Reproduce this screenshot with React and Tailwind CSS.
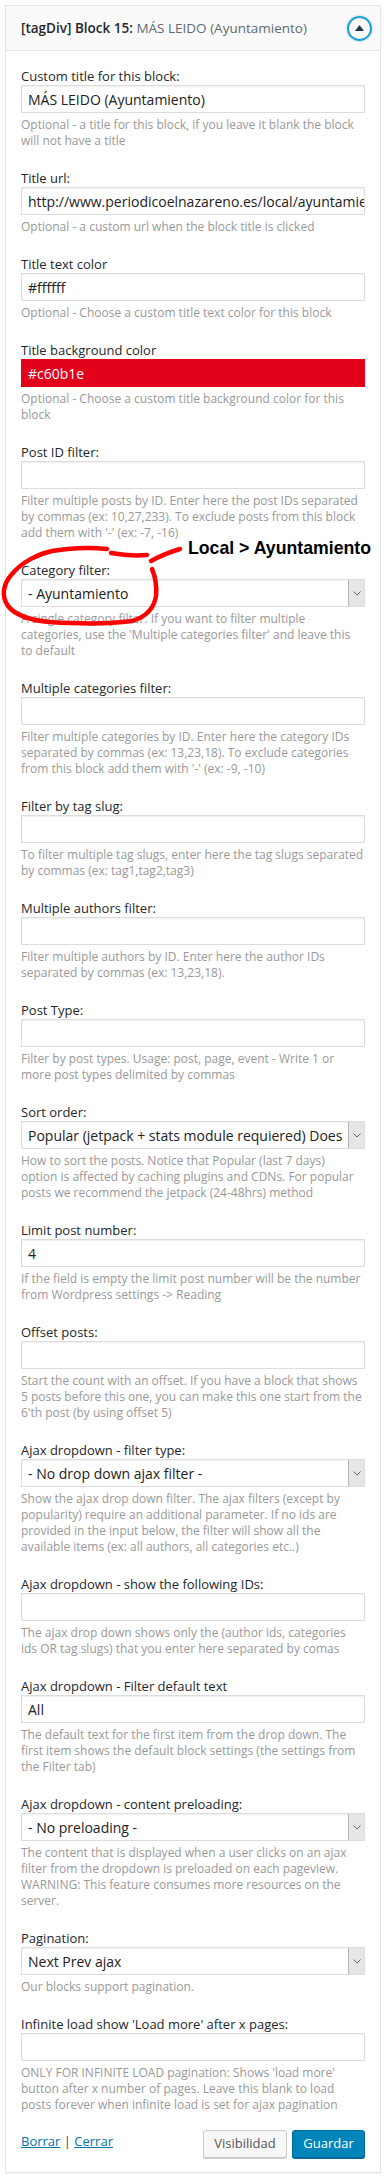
import React from 'react';

const fields = [
  {
    label: 'Custom title for this block:',
    value: 'MÁS LEIDO (Ayuntamiento)',
    help: ['Optional - a title for this block, if you leave it blank the block', 'will not have a title'],
  },
  {
    label: 'Title url:',
    value: 'http://www.periodicoelnazareno.es/local/ayuntamiento/',
    help: ['Optional - a custom url when the block title is clicked'],
  },
  {
    label: 'Title text color',
    value: '#ffffff',
    help: ['Optional - Choose a custom title text color for this block'],
  },
  {
    label: 'Title background color',
    value: '#c60b1e',
    red: true,
    help: ['Optional - Choose a custom title background color for this', 'block'],
  },
  {
    label: 'Post ID filter:',
    help: [
      'Filter multiple posts by ID. Enter here the post IDs separated',
      'by commas (ex: 10,27,233). To exclude posts from this block',
      "add them with '-' (ex: -7, -16)",
    ],
  },
  {
    label: 'Category filter:',
    select: '- Ayuntamiento',
    help: [
      'A single category filter. If you want to filter multiple',
      "categories, use the 'Multiple categories filter' and leave this",
      'to default',
    ],
  },
  {
    label: 'Multiple categories filter:',
    help: [
      'Filter multiple categories by ID. Enter here the category IDs',
      'separated by commas (ex: 13,23,18). To exclude categories',
      "from this block add them with '-' (ex: -9, -10)",
    ],
  },
  {
    label: 'Filter by tag slug:',
    help: ['To filter multiple tag slugs, enter here the tag slugs separated', 'by commas (ex: tag1,tag2,tag3)'],
  },
  {
    label: 'Multiple authors filter:',
    help: ['Filter multiple authors by ID. Enter here the author IDs', 'separated by commas (ex: 13,23,18).'],
  },
  {
    label: 'Post Type:',
    help: ['Filter by post types. Usage: post, page, event - Write 1 or', 'more post types delimited by commas'],
  },
  {
    label: 'Sort order:',
    select: 'Popular (jetpack + stats module requiered) Does',
    help: [
      'How to sort the posts. Notice that Popular (last 7 days)',
      'option is affected by caching plugins and CDNs. For popular',
      'posts we recommend the jetpack (24-48hrs) method',
    ],
  },
  {
    label: 'Limit post number:',
    value: '4',
    help: ['If the field is empty the limit post number will be the number', 'from Wordpress settings -> Reading'],
  },
  {
    label: 'Offset posts:',
    help: [
      'Start the count with an offset. If you have a block that shows',
      '5 posts before this one, you can make this one start from the',
      "6'th post (by using offset 5)",
    ],
  },
  {
    label: 'Ajax dropdown - filter type:',
    select: '- No drop down ajax filter -',
    help: [
      'Show the ajax drop down filter. The ajax filters (except by',
      'popularity) require an additional parameter. If no ids are',
      'provided in the input below, the filter will show all the',
      'available items (ex: all authors, all categories etc..)',
    ],
  },
  {
    label: 'Ajax dropdown - show the following IDs:',
    help: ['The ajax drop down shows only the (author ids, categories', 'ids OR tag slugs) that you enter here separated by comas'],
  },
  {
    label: 'Ajax dropdown - Filter default text',
    value: 'All',
    help: [
      'The default text for the first item from the drop down. The',
      'first item shows the default block settings (the settings from',
      'the Filter tab)',
    ],
  },
  {
    label: 'Ajax dropdown - content preloading:',
    select: '- No preloading -',
    help: [
      'The content that is displayed when a user clicks on an ajax',
      'filter from the dropdown is preloaded on each pageview.',
      'WARNING: This feature consumes more resources on the',
      'server.',
    ],
  },
  {
    label: 'Pagination:',
    select: 'Next Prev ajax',
    help: ['Our blocks support pagination.'],
  },
  {
    label: "Infinite load show 'Load more' after x pages:",
    help: [
      "ONLY FOR INFINITE LOAD pagination: Shows 'load more'",
      'button after x number of pages. Leave this blank to load',
      'posts forever when infinite load is set for ajax pagination',
    ],
  },
];

const Field = ({ field, last }) => {
  return (
    <div className={last ? 'mb-[17px]' : 'mb-[20px]'}>
      <div className="h-[18px] text-[13px] leading-[18px] text-[#23282d] whitespace-nowrap">{field.label}</div>
      {field.select ? (
        <div className="flex items-center h-[28px] border border-[#ddd] bg-white pl-[6px] shadow-[inset_0_1px_2px_rgba(0,0,0,0.07)]">
          <div className="flex-1 overflow-hidden whitespace-nowrap text-[14px] text-[#222] pr-[3px]">{field.select}</div>
          <div className="flex items-center justify-center w-[16px] h-[26px] bg-[#e6e6e6] border-l border-[#b5b5b5]">
            <svg width="8" height="5" viewBox="0 0 8 5">
              <path d="M0.5 0.5 L4 4 L7.5 0.5" fill="none" stroke="#666" strokeWidth="1" />
            </svg>
          </div>
        </div>
      ) : (
        <div
          className={
            field.red
              ? 'flex items-center h-[28px] border border-[#e3001b] bg-[#e3001b] px-[6px] text-[14px] text-white overflow-hidden whitespace-nowrap'
              : 'flex items-center h-[28px] border border-[#ddd] bg-white px-[6px] text-[14px] text-[#222] overflow-hidden whitespace-nowrap shadow-[inset_0_1px_2px_rgba(0,0,0,0.07)]'
          }
        >
          {field.value}
        </div>
      )}
      <div className="mt-[4px] text-[12px] leading-[16px] text-[#999]">
        {field.help.map((line, i) => (
          <div key={i} className="whitespace-nowrap">{line}</div>
        ))}
      </div>
    </div>
  );
};

const App = () => {
  return (
    <div className="relative min-h-[2180px] bg-white pt-[5px] pl-[5px]" style={{ fontFamily: '"Open Sans", "Noto Sans", sans-serif' }}>
      <div className="w-[376px] border border-[#e5e5e5] bg-white shadow-[0_1px_1px_rgba(0,0,0,0.04)]">
        {/* Widget header */}
        <div className="flex items-center justify-between h-[45px] pl-[15px] pr-[8px] bg-[#fafafa] border-b border-[#e5e5e5]">
          <div className="text-[13.5px] leading-[20px] whitespace-nowrap">
            <span className="font-semibold text-[#23282d]">[tagDiv] Block 15:</span>{' '}
            <span className="text-[#606a73]">MÁS LEIDO (Ayuntamiento)</span>
          </div>
          <div className="flex items-center justify-center w-[25px] h-[25px] rounded-full border-2 border-[#1e9fd6] shadow-[0_0_2px_rgba(30,140,190,0.6)]">
            <svg width="9" height="6" viewBox="0 0 9 6">
              <path d="M0 6 L4.5 0 L9 6 Z" fill="#1d3a4d" />
            </svg>
          </div>
        </div>

        {/* Settings */}
        <div className="px-[15px] pt-[16px] pb-[14px]">
          {fields.map((f, i) => (
            <Field key={i} field={f} last={i === fields.length - 1} />
          ))}

          <div className="flex items-start justify-between">
            <div className="text-[13px] leading-[20px] pt-[1px] text-[#444]">
              <a href="#" className="text-[#0073aa] underline">Borrar</a> | <a href="#" className="text-[#0073aa] underline">Cerrar</a>
            </div>
            <div className="flex gap-[5px]">
              <button className="h-[28px] w-[84px] rounded-[3px] border border-[#ccc] bg-[#f7f7f7] text-[13px] text-[#555] shadow-[0_1px_0_#ccc]">
                Visibilidad
              </button>
              <button className="h-[28px] w-[73px] rounded-[3px] border border-[#006799] bg-[#0085ba] text-[13px] text-white shadow-[0_1px_0_#006799]">
                Guardar
              </button>
            </div>
          </div>
        </div>
      </div>

      {/* Hand-drawn annotation */}
      <svg className="absolute left-0 top-0 pointer-events-none" width="386" height="700" viewBox="0 0 386 700">
        <g fill="none" stroke="#f00" strokeWidth="4.5" strokeLinecap="round" strokeLinejoin="round">
          <path d="M107 549 C90 547 70 548 52 551 C38 554 22 562 12 574 C3 584 1 596 8 606 C15 615 28 620 50 622 C80 624 110 624 132 621 C146 617 154 608 156 596 C157 585 155 576 152 569" />
          <path d="M111 553 C122 555 136 556 147 555" />
          <path d="M151 561 C160 556 170 552 180 549" />
        </g>
      </svg>
      <div
        className="absolute left-[188px] top-[539px] text-[17.7px] leading-[18px] font-bold text-black whitespace-nowrap"
        style={{ fontFamily: '"Liberation Sans", Arial, sans-serif' }}
      >
        Local &gt; Ayuntamiento
      </div>
    </div>
  );
};

export default App;
